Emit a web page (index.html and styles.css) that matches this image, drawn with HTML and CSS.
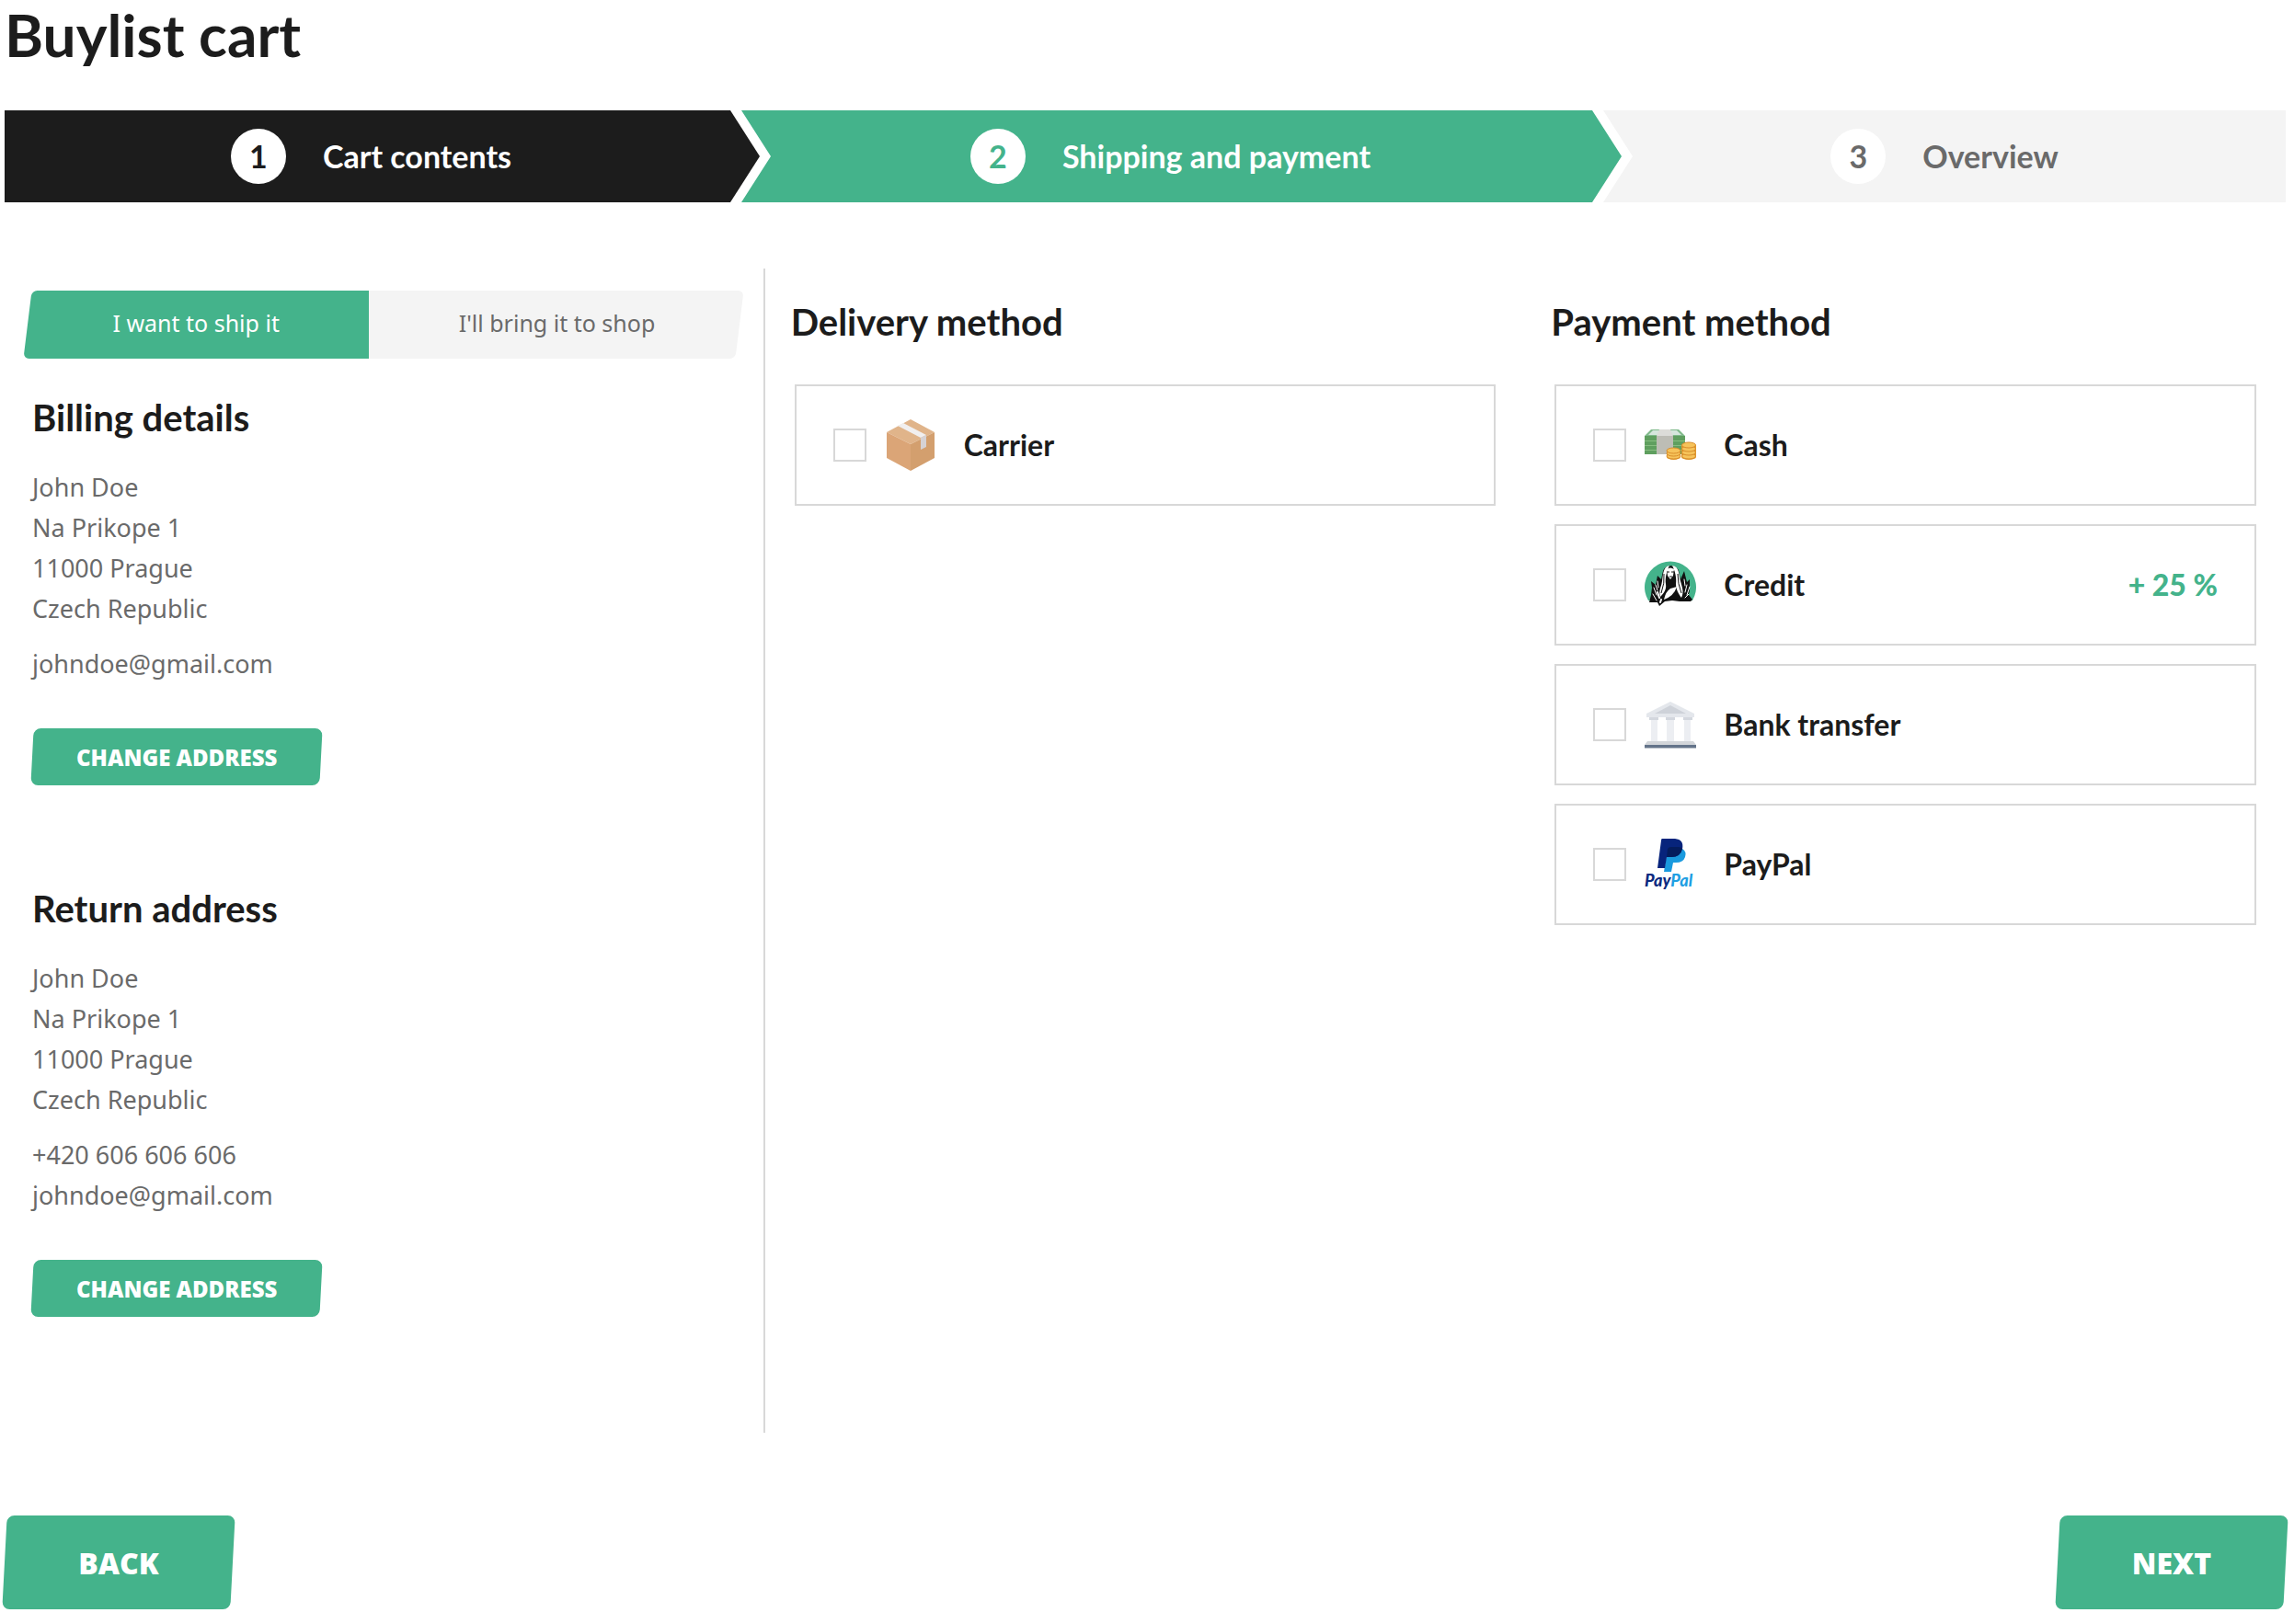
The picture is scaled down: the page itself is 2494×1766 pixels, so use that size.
FILE: index.html
```html
<!DOCTYPE html>
<html lang="en">
<head>
    <meta charset="UTF-8">
    <meta name="viewport" content="width=device-width, initial-scale=1.0">
    <title>Buylist cart</title>
    <link rel="stylesheet" href="styles.css">
</head>
<body>
    <h1 class="page-title">Buylist cart</h1>

    <ol class="steps">
        <li class="step step-done"><span class="step-number">1</span>Cart contents</li>
        <li class="step step-active"><span class="step-number">2</span>Shipping and payment</li>
        <li class="step step-last"><span class="step-number">3</span>Overview</li>
    </ol>

    <main class="checkout">
        <section class="addresses">
            <div class="toggle">
                <button type="button" class="toggle-btn active">I want to ship it</button>
                <button type="button" class="toggle-btn">I'll bring it to shop</button>
            </div>

            <div class="address">
                <h2>Billing details</h2>
                <p>John Doe<br>Na Prikope 1<br>11000 Prague<br>Czech Republic</p>
                <p>johndoe@gmail.com</p>
                <button type="button" class="btn">CHANGE ADDRESS</button>
            </div>

            <div class="address">
                <h2>Return address</h2>
                <p>John Doe<br>Na Prikope 1<br>11000 Prague<br>Czech Republic</p>
                <p>+420 606 606 606<br>johndoe@gmail.com</p>
                <button type="button" class="btn">CHANGE ADDRESS</button>
            </div>
        </section>

        <section class="methods">
            <h2>Delivery method</h2>
            <label class="option">
                <input type="checkbox" name="carrier">
                <svg class="option-icon" viewBox="0 0 56 56">
                    <path fill="#e0b48a" d="M28 0 54 14 28 27 2 14z"/>
                    <path fill="#dba577" d="M2 14 28 27V56L2 42z"/>
                    <path fill="#d39f6e" d="M28 27 54 14V42L28 56z"/>
                    <path fill="#f1efef" d="M14 7 20 4 45 17 39 20z"/>
                    <path fill="#d6d2d4" d="M39 20 45 17V30L39 33z"/>
                </svg>
                <span>Carrier</span>
            </label>
        </section>

        <section class="methods">
            <h2>Payment method</h2>
            <label class="option">
                <input type="checkbox" name="cash">
                <svg class="option-icon" viewBox="0 0 56 56">
                    <path fill="#7fb98a" d="M7 11H37L44 18H0z"/>
                    <path fill="#d5e6dc" d="M9 12H35L40 17H4z"/>
                    <path fill="#5f9f5f" d="M0 18H44V38H0z"/>
                    <path stroke="#86bd80" d="M0 23.500H44M0 28.500H44M0 33.500H44"/>
                    <path fill="#dcdcd8" d="M16 11H28L31 18H13z"/>
                    <path fill="#bdbdb5" d="M13 18H31V38H13z"/>
                    <g fill="#e0982f">
                        <path d="M24 34H39V41A7.500 3 0 0 1 24 41z"/>
                        <path d="M40 28H56V41A8 3 0 0 1 40 41z"/>
                    </g>
                    <g fill="#f6c35a" stroke="#d98e2b">
                        <ellipse cx="31.500" cy="40" rx="7.500" ry="3"/>
                        <ellipse cx="31.500" cy="37" rx="7.500" ry="3"/>
                        <ellipse cx="31.500" cy="34" rx="7.500" ry="3"/>
                        <ellipse cx="48" cy="40" rx="7.500" ry="3"/>
                        <ellipse cx="48" cy="36" rx="7.500" ry="3"/>
                        <ellipse cx="48" cy="32" rx="7.500" ry="3"/>
                        <ellipse cx="48" cy="28" rx="7.500" ry="3"/>
                    </g>
                </svg>
                <span>Cash</span>
            </label>
            <label class="option">
                <input type="checkbox" name="credit">
                <svg class="option-icon" viewBox="0 0 56 56">
                    <path fill="#44b38b" d="M4 45A28 28 0 1 1 52 45z"/>
                    <path fill="#111" d="M5 47 7 39 8 31 7 24 12 28 14 18 18 22 20 13C22 6 33 5 37 12L39 22 43 13 46 25 49 22V34L48 39 52 44 50 46H38L30 45 22 46 16 51 14 47z"/>
                    <path fill="#fff" d="M27 7C20 8 20 17 19 24 18 31 15 34 17 41 21 37 24 33 23 27 22 21 24 13 27 7z"/>
                    <path fill="#fff" d="M30 7C38 8 37 17 39 24 41 31 43 36 40 42 37 38 34 33 34 27 35 20 33 13 30 7z"/>
                    <path fill="#fff" d="M24 11Q28 8 32 11L31 18 28 22 25 18z"/>
                    <path fill="#fff" d="M21 44Q23 35 28 32L35 30Q32 40 21 44z"/>
                    <path stroke="#111" fill="none" d="M21 16Q22 26 18 37M36 16Q36 27 40 37M24 14H27M29 14H32M27 19H30"/>
                    <g fill="none" stroke="#fff" stroke-linecap="round">
                        <path d="M10 31 13 39M9 38 13 45M14 24 15 31M12 28 14 34M46 28 44 36M49 30 46 39M43 22 44 29M48 38 44 42"/>
                        <path stroke-width="2" d="M14 36 16 42M18 44 17 47"/>
                    </g>
                </svg>
                <span>Credit</span>
                <strong class="bonus">+ 25 %</strong>
            </label>
            <label class="option">
                <input type="checkbox" name="bank">
                <svg class="option-icon" viewBox="0 0 56 56">
                    <path fill="#e4e7ec" d="M28 3 54 16V20H2V16z"/>
                    <path fill="#ced2d9" d="M28 7 45 16H11z"/>
                    <path fill="#eceef2" d="M7 23H14V46H7zM24 23H32V46H24zM43 23H50V46H43z"/>
                    <path fill="#d3d7de" d="M5 20H15V23H5zM23 20H33V23H23zM42 20H52V23H42z"/>
                    <path fill="#d3d6da" d="M3 46H53L56 50H0z"/>
                    <path fill="#64748a" d="M0 50H56V53H0z"/>
                    <path fill="#b6bdc6" d="M0 53H56V54H0z"/>
                </svg>
                <span>Bank transfer</span>
            </label>
            <label class="option">
                <input type="checkbox" name="paypal">
                <svg class="option-icon" viewBox="0 0 56 56">
                    <path fill="#1a9ade" d="M25 11H41Q46 14 44 20 42 26 34 26H31L29 36H21z"/>
                    <path fill="#07247c" d="M19 0H33Q43 1 41 11 39 20 29 20H24L22 32H14L18 2Q18 0 19 0z"/>
                    <path fill="#041c5c" d="M25 11Q26 9 29 9H36Q40 9 41 11 39 20 29 20H24z"/>
                    <text class="paypal-name" x="0" y="52" fill="#0b2a80">Pay<tspan fill="#1f9fe3">Pal</tspan></text>
                </svg>
                <span>PayPal</span>
            </label>
        </section>
    </main>

    <nav class="actions">
        <button type="button" class="btn btn-large">BACK</button>
        <button type="button" class="btn btn-large">NEXT</button>
    </nav>
</body>
</html>
```
FILE: styles.css
```css
* {
    box-sizing: border-box;
}

body {
    margin: 0;
    padding: 0 9px 0 5px;
    background-color: #fff;
    color: #6a6a6a;
    font-family: "Noto Sans", sans-serif;
    font-size: 27px;
    line-height: 44px;
}

h1, h2, .step, .option {
    font-family: Lato, sans-serif;
    font-weight: 700;
    color: #1c1c1c;
}

button {
    border: none;
    cursor: pointer;
    font-family: inherit;
}

.page-title {
    margin: 0;
    padding-bottom: 44px;
    font-size: 64px;
    line-height: 76px;
}

/* progress bar */
.steps {
    display: grid;
    grid-template-columns: 821fr 937fr 722fr;
    margin: 0;
    padding: 0;
    list-style: none;
}

.step {
    display: flex;
    align-items: center;
    justify-content: center;
    gap: 40px;
    height: 100px;
    padding-right: 24px;
    font-size: 34px;
}

.step-number {
    width: 60px;
    border-radius: 50%;
    background-color: #fff;
    line-height: 60px;
    text-align: center;
}

.step-done {
    background-color: #1c1c1c;
    color: #fff;
    clip-path: polygon(0 0, calc(100% - 32px) 0, 100% 50%, calc(100% - 32px) 100%, 0 100%);
}

.step-done .step-number {
    color: #1c1c1c;
}

.step-active {
    margin-left: -20px;
    background-color: #44b38b;
    color: #fff;
    clip-path: polygon(0 0, calc(100% - 32px) 0, 100% 50%, calc(100% - 32px) 100%, 0 100%, 32px 50%);
}

.step-active .step-number {
    color: #44b38b;
}

.step-last {
    margin-left: -20px;
    padding-right: 0;
    background-color: #f4f4f4;
    color: #6a6a6a;
    clip-path: polygon(0 0, 100% 0, 100% 100%, 0 100%, 32px 50%);
}

/* columns */
.checkout {
    display: grid;
    grid-template-columns: 1fr 1fr 1fr;
    margin-top: 72px;
}

.checkout h2 {
    margin: 0;
    font-size: 40px;
    line-height: 60px;
}

.addresses {
    padding: 24px 20px 56px;
    border-right: 2px solid #d8d8d8;
}

.toggle {
    display: flex;
}

.toggle-btn {
    position: relative;
    z-index: 0;
    flex: 1 1 auto;
    height: 74px;
    padding: 0 0 4px;
    overflow: hidden;
    background: none;
    color: #6a6a6a;
    font-size: 25px;
}

.toggle-btn::before {
    content: "";
    position: absolute;
    inset: 0 5px 0 -20px;
    z-index: -1;
    border-radius: 6px;
    background-color: #f4f4f4;
    transform: skewX(-7deg);
}

.toggle-btn.active {
    color: #fff;
}

.toggle-btn.active::before {
    inset: 0 -20px 0 5px;
    background-color: #44b38b;
}

.address {
    padding: 34px 10px 70px;
}

.checkout .address h2 {
    margin-bottom: 24px;
}

.address p {
    margin: 16px 0;
}

.btn {
    position: relative;
    z-index: 0;
    height: 62px;
    margin-top: 32px;
    padding: 0 48px;
    background: none;
    color: #fff;
    font-family: "Open Sans", sans-serif;
    font-size: 24px;
    font-weight: 800;
}

.btn::before {
    content: "";
    position: absolute;
    inset: 0;
    z-index: -1;
    border-radius: 8px;
    background-color: #44b38b;
    transform: skewX(-3deg);
}

.methods {
    padding: 28px 32px;
}

.checkout .methods h2 {
    margin-left: -4px;
}

.option {
    display: flex;
    align-items: center;
    gap: 20px;
    height: 132px;
    margin-top: 20px;
    padding: 0 40px;
    border: 2px solid #d8d8d8;
    font-size: 32px;
}

.methods h2 + .option {
    margin-top: 38px;
}

.option input {
    appearance: none;
    width: 36px;
    height: 36px;
    margin: 0;
    border: 2px solid #d8d8d8;
}

.option input:checked {
    background-color: #44b38b;
}

.option-icon {
    width: 56px;
    height: 56px;
    margin-right: 10px;
}

.paypal-name {
    font-family: Lato, sans-serif;
    font-size: 18px;
    font-style: italic;
    font-weight: 900;
}

.bonus {
    margin-left: auto;
    color: #44b38b;
}

.actions {
    display: flex;
    justify-content: space-between;
    margin-top: 90px;
    padding-bottom: 16px;
}

.btn-large {
    width: 248px;
    height: 102px;
    margin-top: 0;
    font-size: 32px;
}
```
